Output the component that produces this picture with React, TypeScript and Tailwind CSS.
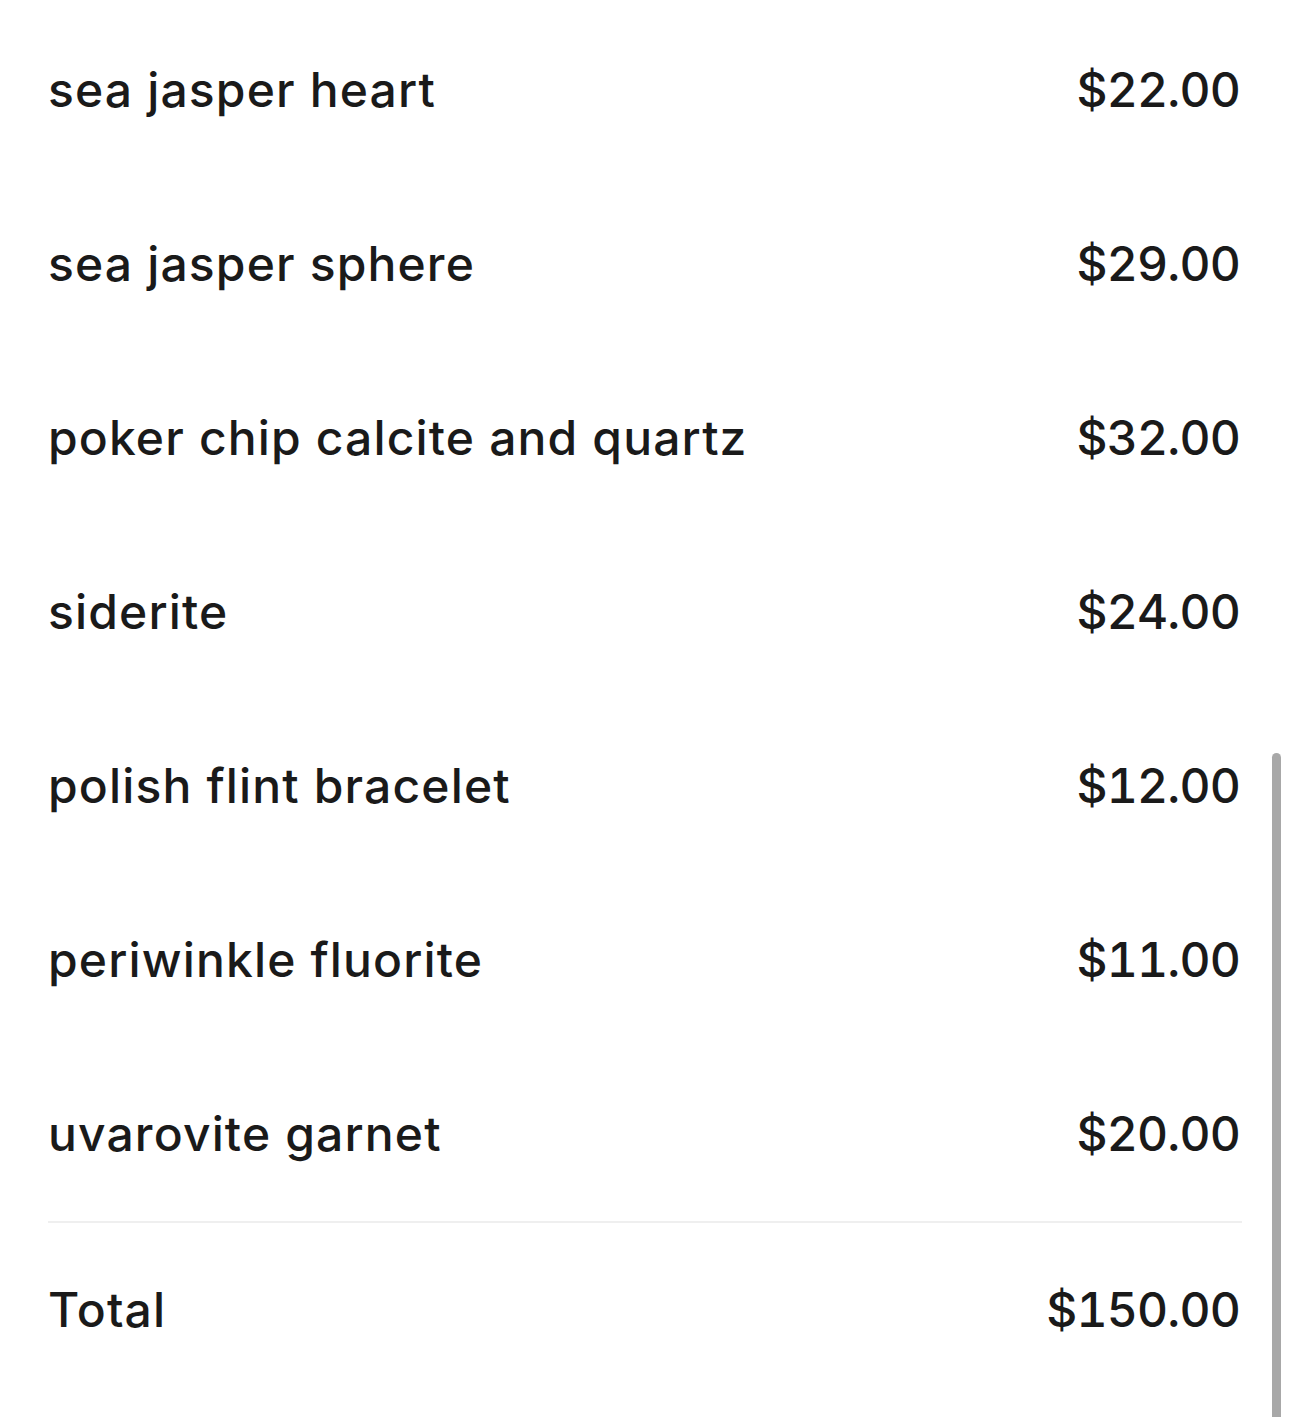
const items = [
  { name: 'sea jasper heart', price: '$22.00' },
  { name: 'sea jasper sphere', price: '$29.00' },
  { name: 'poker chip calcite and quartz', price: '$32.00' },
  { name: 'siderite', price: '$24.00' },
  { name: 'polish flint bracelet', price: '$12.00' },
  { name: 'periwinkle fluorite', price: '$11.00' },
  { name: 'uvarovite garnet', price: '$20.00' },
];

export default function App() {
  return (
    <div
      className="relative h-[1417px] w-full overflow-hidden bg-white text-[#1a1a1a]"
      style={{ fontFamily: 'Inter, "Noto Sans", sans-serif' }}
    >
      <div className="pt-[3px] pl-12 pr-[48px]">
        {items.map((item) => (
          <div key={item.name} className="flex h-[174px] items-center justify-between pr-[2px]">
            <span className="text-[48px] font-medium tracking-[1.15px]">{item.name}</span>
            <span className="text-[48px] font-medium tabular-nums tracking-[-0.8px]">{item.price}</span>
          </div>
        ))}

        <div className="h-[2px] bg-[#efefef]" />

        {/* Total */}
        <div className="flex h-[174px] items-center justify-between pr-[2px]">
          <span className="text-[48px] font-medium tracking-[1.15px]">Total</span>
          <span className="text-[48px] font-medium tabular-nums tracking-[-0.8px]">$150.00</span>
        </div>
      </div>

      {/* scrollbar */}
      <div className="absolute right-[9px] top-[753px] h-[680px] w-[9px] rounded-full bg-[#a8a8a8]" />
    </div>
  );
}
